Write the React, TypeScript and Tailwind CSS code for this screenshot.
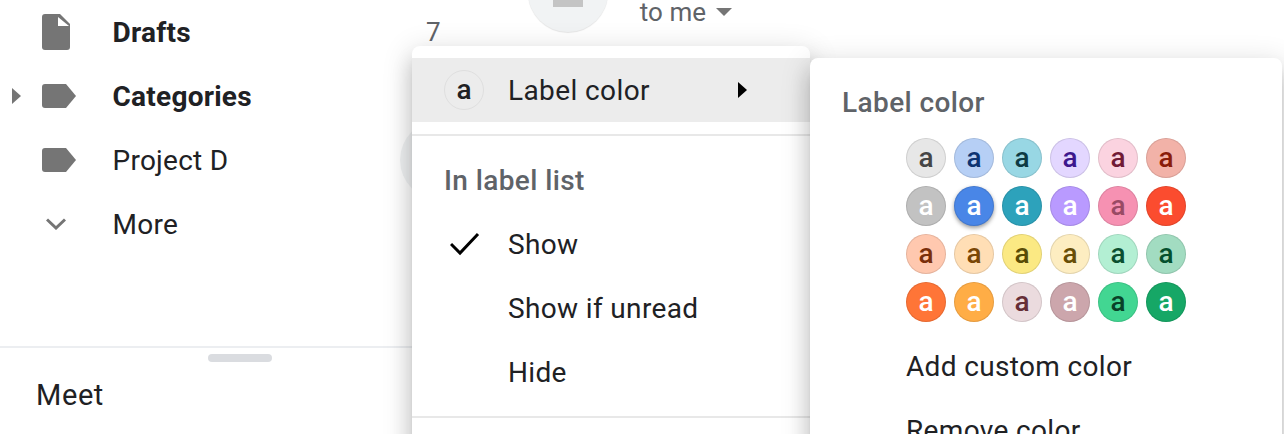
const swatches = [
  ["bg-[#e7e7e7] text-[#464646]", "bg-[#b6cff5] text-[#0d3472]", "bg-[#98d7e4] text-[#0d3b44]", "bg-[#e3d7ff] text-[#3d188e]", "bg-[#fbd3e0] text-[#711a36]", "bg-[#f2b2a8] text-[#8a1c0a]"],
  ["bg-[#c2c2c2] text-white", "bg-[#4986e7] text-white shadow-[0_2px_4px_rgba(0,0,0,0.4)]", "bg-[#2da2bb] text-white", "bg-[#b99aff] text-white", "bg-[#f691b2] text-[#994a64]", "bg-[#fb4c2f] text-white"],
  ["bg-[#ffc8af] text-[#7a2e0b]", "bg-[#ffdeb5] text-[#7a4706]", "bg-[#fbe983] text-[#594c05]", "bg-[#fdedc1] text-[#684e07]", "bg-[#b3efd3] text-[#0b4f30]", "bg-[#a2dcc1] text-[#04502e]"],
  ["bg-[#ff7537] text-white", "bg-[#ffad46] text-white", "bg-[#ebdbde] text-[#662e37]", "bg-[#cca6ac] text-white", "bg-[#42d692] text-[#094228]", "bg-[#16a766] text-white"],
];

const DraftIcon = () => (
  <svg width="28" height="36" viewBox="0 0 28 36" className="fill-[#757575]">
    <path d="M3 0H18L28 10V33a3 3 0 0 1-3 3H3a3 3 0 0 1-3-3V3a3 3 0 0 1 3-3z" />
    <path d="M16 3L27 12H16z" fill="#fff" />
  </svg>
);

const LabelIcon = () => (
  <svg width="34" height="24" viewBox="0 0 34 24" className="fill-[#757575]">
    <path d="M3 0H24L34 12L24 24H3a3 3 0 0 1-3-3V3a3 3 0 0 1 3-3z" />
  </svg>
);

const ChevronIcon = () => (
  <svg width="20" height="12" viewBox="0 0 20 12" fill="none" stroke="#757575" strokeWidth="3">
    <path d="M1 1.5L10 10L19 1.5" />
  </svg>
);

const NavRow = ({ icon, label, bold, caret }: { icon: React.ReactNode; label: string; bold?: boolean; caret?: boolean }) => (
  <div className="flex h-16 items-center">
    <div className="flex w-[42px] justify-end pr-[21px]">
      {caret && (
        <svg width="9" height="16" viewBox="0 0 9 16" className="fill-[#757575]">
          <path d="M0 0L9 8L0 16z" />
        </svg>
      )}
    </div>
    <div className="flex w-[70.5px] items-center">{icon}</div>
    <span className={`pt-0.5 text-[28px] leading-[40px] tracking-[0.25px] text-[#202124] ${bold ? "font-bold" : ""}`}>{label}</span>
  </div>
);

const Sidebar = () => (
  <aside className="flex h-full w-[412px] shrink-0 flex-col">
    <NavRow icon={<DraftIcon />} label="Drafts" bold />
    <NavRow icon={<LabelIcon />} label="Categories" bold caret />
    <NavRow icon={<LabelIcon />} label="Project D" />
    <NavRow icon={<div className="pl-1"><ChevronIcon /></div>} label="More" />
    <div className="mt-[90px] h-0.5 bg-[#eceef1]" />
    <div className="ml-[208px] mt-1.5 h-2 w-16 rounded-full bg-[#dadce0]" />
    <div className="pl-[36px] pt-[13px] text-[29px] leading-[40px] tracking-[0.6px] text-[#202124]">Meet</div>
  </aside>
);

const Background = () => (
  <main className="flex min-w-0 flex-1 flex-col">
    <div className="flex items-start">
      <span className="mt-[16px] pl-[14px] text-[26px] leading-[32px] text-[#5f6368]">7</span>
      <div className="relative -mt-[48px] ml-[87px] flex h-20 w-20 shrink-0 justify-center rounded-full bg-[#f1f3f4] shadow-[0_1px_1px_rgba(0,0,0,0.1)]">
        <div className="mt-[40px] h-[15px] w-[30px] bg-[#c4c4c4]" />
      </div>
      <span className="ml-[32px] text-[26px] leading-[24px] tracking-[0.1px] text-[#5f6368]">to me</span>
      <svg width="16" height="8" viewBox="0 0 16 8" className="ml-2.5 mt-2 fill-[#757575]">
        <path d="M0 0H16L8 8z" />
      </svg>
    </div>
    <div className="-ml-3 mt-[72px] h-20 w-20 rounded-full bg-[#f1f3f4]" />
  </main>
);

const LabelMenu = () => (
  <div className="absolute left-[412px] top-[46px] h-[420px] w-[398px] rounded-lg bg-white pt-3 shadow-[0_16px_20px_2px_rgba(0,0,0,0.14),0_6px_28px_4px_rgba(0,0,0,0.12),0_10px_10px_-6px_rgba(0,0,0,0.2)]">
    <div className="flex h-16 items-center bg-[#ececec] pl-8">
      <div className="flex h-10 w-10 items-center justify-center rounded-full border border-[#dfdfdf] text-[28px] font-medium leading-none text-[#202124]">a</div>
      <span className="ml-6 pt-0.5 text-[28px] leading-[40px] tracking-[0.4px] text-[#202124]">Label color</span>
      <svg width="9" height="16" viewBox="0 0 9 16" className="ml-[88px] fill-black">
        <path d="M0 0L9 8L0 16z" />
      </svg>
    </div>
    <div className="mt-3 h-0.5 bg-[#e8e8e8]" />
    <div className="flex h-[88px] items-center pl-8 pt-0.5 text-[28px] font-medium tracking-[0.4px] text-[#5f6368]">In label list</div>
    <div className="relative flex h-10 items-center pl-24 pt-0.5 text-[28px] tracking-[0.35px] text-[#202124]">
      <svg width="30" height="24" viewBox="0 0 30 24" fill="none" stroke="#000" strokeWidth="3" className="absolute left-[38px] top-[8px]">
        <path d="M1 12L10 21L28 2" />
      </svg>
      Show
    </div>
    <div className="mt-6 flex h-10 items-center pl-24 pt-0.5 text-[28px] tracking-[0.35px] text-[#202124]">Show if unread</div>
    <div className="mt-6 flex h-10 items-center pl-24 pt-0.5 text-[28px] tracking-[0.35px] text-[#202124]">Hide</div>
    <div className="mt-6 h-0.5 bg-[#e8e8e8]" />
  </div>
);

const ColorMenu = () => (
  <div className="absolute left-[810px] top-[58px] h-[420px] w-[472px] rounded-lg bg-white pl-8 pt-6 shadow-[0_16px_20px_2px_rgba(0,0,0,0.14),0_6px_28px_4px_rgba(0,0,0,0.12),0_10px_10px_-6px_rgba(0,0,0,0.2)]">
    <div className="text-[28px] font-medium leading-[42px] tracking-[0.4px] text-[#5f6368]">Label color</div>
    <div className="ml-16 mt-[14px] flex flex-col gap-2">
      {swatches.map((row, i) => (
        <div key={i} className="flex gap-2">
          {row.map((c, j) => (
            <div key={j} className={`flex h-10 w-10 items-center justify-center rounded-full text-[28px] font-medium leading-none inset-ring inset-ring-black/10 ${c}`}>a</div>
          ))}
        </div>
      ))}
    </div>
    <div className="ml-16 mt-[25px] flex h-10 items-center text-[28px] tracking-[0.35px] text-[#202124]">Add custom color</div>
    <div className="ml-16 mt-6 flex h-10 items-center text-[28px] tracking-[0.35px] text-[#202124]">Remove color</div>
  </div>
);

export default function App() {
  return (
    <div className="relative flex h-[434px] w-[1284px] overflow-hidden bg-white font-['Roboto',sans-serif]">
      <Sidebar />
      <Background />
      <LabelMenu />
      <ColorMenu />
    </div>
  );
}
